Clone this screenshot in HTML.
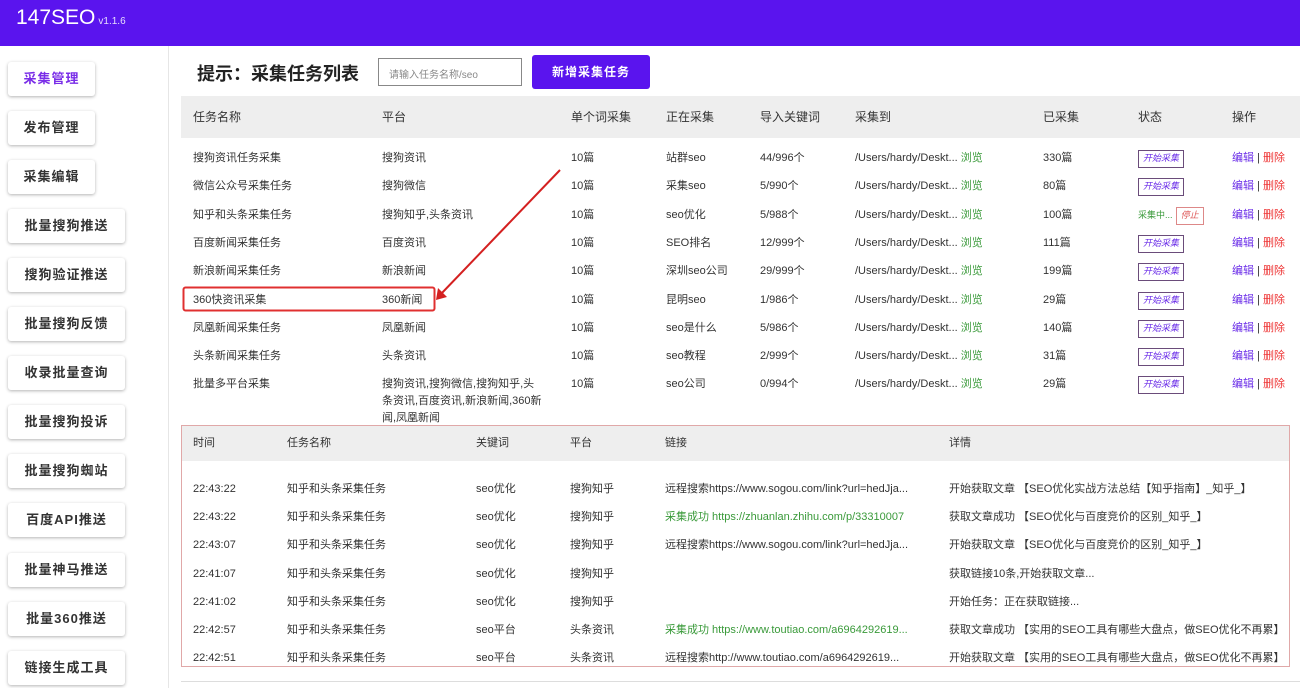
<!DOCTYPE html>
<html><head><meta charset="utf-8"><style>
*{margin:0;padding:0;box-sizing:border-box}
body{width:1300px;height:688px;overflow:hidden;background:#fff;font-family:"Liberation Sans","Noto Sans CJK SC",sans-serif;color:#333;position:relative}
.hd{position:absolute;left:0;top:0;width:1300px;height:46px;background:#5a14ee}
.logo{position:absolute;left:16px;top:6px;color:#fff;font-size:21px}
.logo small{font-size:10px;opacity:.85;margin-left:3px}
.side{position:absolute;left:168px;top:46px;width:1px;height:642px;background:#e6e6e6}
.btn{position:absolute;left:8px;width:117px;height:34px;background:#fff;border-radius:3px;box-shadow:0 1px 3px rgba(0,0,0,.3);font-size:13px;font-weight:bold;color:#333;text-align:center;line-height:34px;letter-spacing:1px}
.title{position:absolute;left:197px;top:60px;font-size:18px;font-weight:bold;color:#222}
.inp{position:absolute;left:378px;top:58px;width:144px;height:28px;border:1px solid #888;font-size:10px;color:#888;padding:7px 10px}
.add{position:absolute;left:532px;top:55px;width:118px;height:34px;background:#5a14ee;border-radius:3px;color:#fff;font-size:12px;font-weight:bold;text-align:center;line-height:34px;letter-spacing:1px}
.th{position:absolute;left:181px;top:96px;width:1119px;height:42px;background:#eee}
.r{position:absolute;left:0;width:1300px;font-size:11px;height:16px;line-height:16px;white-space:nowrap}
.r span{position:absolute}
.h{font-size:12px}
.g{color:#3a9a3a}.p{color:#6a2ce8}.red{color:#e33}
.st{display:inline-block;border:1.5px solid #6a4c7a;font-size:9px;padding:0 4px;height:18px;line-height:15px;color:#6a2ce8;margin-top:-2px}
.log{position:absolute;left:181px;top:425px;width:1109px;height:242px;border:1px solid #e0a8a8}
.lh{position:absolute;left:182px;top:426px;width:1107px;height:35px;background:#eee}
</style></head><body>
<div class="hd"><div class="logo">147SEO<small>v1.1.6</small></div></div>
<div class="side"></div>
<div class="btn" style="top:62px;width:87px;color:#7a2ee8">采集管理</div>
<div class="btn" style="top:111px;width:87px">发布管理</div>
<div class="btn" style="top:160px;width:87px">采集编辑</div>
<div class="btn" style="top:209px">批量搜狗推送</div>
<div class="btn" style="top:258px">搜狗验证推送</div>
<div class="btn" style="top:307px">批量搜狗反馈</div>
<div class="btn" style="top:356px">收录批量查询</div>
<div class="btn" style="top:405px">批量搜狗投诉</div>
<div class="btn" style="top:454px">批量搜狗蜘站</div>
<div class="btn" style="top:503px">百度API推送</div>
<div class="btn" style="top:553px">批量神马推送</div>
<div class="btn" style="top:602px">批量360推送</div>
<div class="btn" style="top:651px">链接生成工具</div>

<div class="title">提示：采集任务列表</div>
<div class="inp">请输入任务名称/seo</div>
<div class="add">新增采集任务</div>
<div class="th"></div>
<div class="r h" style="top:109px"><span style="left:193px">任务名称</span><span style="left:382px">平台</span><span style="left:571px">单个词采集</span><span style="left:666px">正在采集</span><span style="left:760px">导入关键词</span><span style="left:855px">采集到</span><span style="left:1043px">已采集</span><span style="left:1138px">状态</span><span style="left:1232px">操作</span></div>

<div class="r" style="top:150px"><span style="left:193px">搜狗资讯任务采集</span><span style="left:382px">搜狗资讯</span><span style="left:571px">10篇</span><span style="left:666px">站群seo</span><span style="left:760px">44/996个</span><span style="left:855px">/Users/hardy/Deskt... <b class="g" style="font-weight:normal">浏览</b></span><span style="left:1043px">330篇</span><span style="left:1138px"><i class="st">开始采集</i></span><span style="left:1232px"><b class="p" style="font-weight:normal">编辑</b> | <b class="red" style="font-weight:normal">删除</b></span></div>
<div class="r" style="top:178px"><span style="left:193px">微信公众号采集任务</span><span style="left:382px">搜狗微信</span><span style="left:571px">10篇</span><span style="left:666px">采集seo</span><span style="left:760px">5/990个</span><span style="left:855px">/Users/hardy/Deskt... <b class="g" style="font-weight:normal">浏览</b></span><span style="left:1043px">80篇</span><span style="left:1138px"><i class="st">开始采集</i></span><span style="left:1232px"><b class="p" style="font-weight:normal">编辑</b> | <b class="red" style="font-weight:normal">删除</b></span></div>
<div class="r" style="top:207px"><span style="left:193px">知乎和头条采集任务</span><span style="left:382px">搜狗知乎,头条资讯</span><span style="left:571px">10篇</span><span style="left:666px">seo优化</span><span style="left:760px">5/988个</span><span style="left:855px">/Users/hardy/Deskt... <b class="g" style="font-weight:normal">浏览</b></span><span style="left:1043px">100篇</span><span style="left:1138px"><b class="g" style="font-weight:normal;font-size:9px">采集中...</b> <i class="st" style="border-color:#d88;color:#d55">停止</i></span><span style="left:1232px"><b class="p" style="font-weight:normal">编辑</b> | <b class="red" style="font-weight:normal">删除</b></span></div>
<div class="r" style="top:235px"><span style="left:193px">百度新闻采集任务</span><span style="left:382px">百度资讯</span><span style="left:571px">10篇</span><span style="left:666px">SEO排名</span><span style="left:760px">12/999个</span><span style="left:855px">/Users/hardy/Deskt... <b class="g" style="font-weight:normal">浏览</b></span><span style="left:1043px">111篇</span><span style="left:1138px"><i class="st">开始采集</i></span><span style="left:1232px"><b class="p" style="font-weight:normal">编辑</b> | <b class="red" style="font-weight:normal">删除</b></span></div>
<div class="r" style="top:263px"><span style="left:193px">新浪新闻采集任务</span><span style="left:382px">新浪新闻</span><span style="left:571px">10篇</span><span style="left:666px">深圳seo公司</span><span style="left:760px">29/999个</span><span style="left:855px">/Users/hardy/Deskt... <b class="g" style="font-weight:normal">浏览</b></span><span style="left:1043px">199篇</span><span style="left:1138px"><i class="st">开始采集</i></span><span style="left:1232px"><b class="p" style="font-weight:normal">编辑</b> | <b class="red" style="font-weight:normal">删除</b></span></div>
<div class="r" style="top:292px"><span style="left:193px">360快资讯采集</span><span style="left:382px">360新闻</span><span style="left:571px">10篇</span><span style="left:666px">昆明seo</span><span style="left:760px">1/986个</span><span style="left:855px">/Users/hardy/Deskt... <b class="g" style="font-weight:normal">浏览</b></span><span style="left:1043px">29篇</span><span style="left:1138px"><i class="st">开始采集</i></span><span style="left:1232px"><b class="p" style="font-weight:normal">编辑</b> | <b class="red" style="font-weight:normal">删除</b></span></div>
<div class="r" style="top:320px"><span style="left:193px">凤凰新闻采集任务</span><span style="left:382px">凤凰新闻</span><span style="left:571px">10篇</span><span style="left:666px">seo是什么</span><span style="left:760px">5/986个</span><span style="left:855px">/Users/hardy/Deskt... <b class="g" style="font-weight:normal">浏览</b></span><span style="left:1043px">140篇</span><span style="left:1138px"><i class="st">开始采集</i></span><span style="left:1232px"><b class="p" style="font-weight:normal">编辑</b> | <b class="red" style="font-weight:normal">删除</b></span></div>
<div class="r" style="top:348px"><span style="left:193px">头条新闻采集任务</span><span style="left:382px">头条资讯</span><span style="left:571px">10篇</span><span style="left:666px">seo教程</span><span style="left:760px">2/999个</span><span style="left:855px">/Users/hardy/Deskt... <b class="g" style="font-weight:normal">浏览</b></span><span style="left:1043px">31篇</span><span style="left:1138px"><i class="st">开始采集</i></span><span style="left:1232px"><b class="p" style="font-weight:normal">编辑</b> | <b class="red" style="font-weight:normal">删除</b></span></div>
<div class="r" style="top:376px"><span style="left:193px">批量多平台采集</span><span style="left:382px">搜狗资讯,搜狗微信,搜狗知乎,头</span><span style="left:571px">10篇</span><span style="left:666px">seo公司</span><span style="left:760px">0/994个</span><span style="left:855px">/Users/hardy/Deskt... <b class="g" style="font-weight:normal">浏览</b></span><span style="left:1043px">29篇</span><span style="left:1138px"><i class="st">开始采集</i></span><span style="left:1232px"><b class="p" style="font-weight:normal">编辑</b> | <b class="red" style="font-weight:normal">删除</b></span></div>
<div class="r" style="top:393px"><span style="left:382px">条资讯,百度资讯,新浪新闻,360新</span></div>
<div class="r" style="top:410px"><span style="left:382px">闻,凤凰新闻</span></div>

<svg style="position:absolute;left:0;top:0" width="1300" height="688"><rect x="183.5" y="287.5" width="251" height="23" fill="none" stroke="#e03030" stroke-width="2" rx="2"/><line x1="560" y1="170" x2="440" y2="295" stroke="#d42020" stroke-width="2"/><polygon points="436,300 438,288 447,297" fill="#d42020"/></svg>

<div class="log"></div><div class="lh"></div>
<div class="r h" style="top:435px;font-size:11px"><span style="left:193px">时间</span><span style="left:287px">任务名称</span><span style="left:476px">关键词</span><span style="left:570px">平台</span><span style="left:665px">链接</span><span style="left:949px">详情</span></div>
<div class="r" style="top:481px"><span style="left:193px">22:43:22</span><span style="left:287px">知乎和头条采集任务</span><span style="left:476px">seo优化</span><span style="left:570px">搜狗知乎</span><span style="left:665px">远程搜索https://www.sogou.com/link?url=hedJja...</span><span style="left:949px">开始获取文章 【SEO优化实战方法总结【知乎指南】_知乎_】</span></div>
<div class="r" style="top:509px"><span style="left:193px">22:43:22</span><span style="left:287px">知乎和头条采集任务</span><span style="left:476px">seo优化</span><span style="left:570px">搜狗知乎</span><span class="g" style="left:665px">采集成功 https://zhuanlan.zhihu.com/p/33310007</span><span style="left:949px">获取文章成功 【SEO优化与百度竞价的区别_知乎_】</span></div>
<div class="r" style="top:537px"><span style="left:193px">22:43:07</span><span style="left:287px">知乎和头条采集任务</span><span style="left:476px">seo优化</span><span style="left:570px">搜狗知乎</span><span style="left:665px">远程搜索https://www.sogou.com/link?url=hedJja...</span><span style="left:949px">开始获取文章 【SEO优化与百度竞价的区别_知乎_】</span></div>
<div class="r" style="top:566px"><span style="left:193px">22:41:07</span><span style="left:287px">知乎和头条采集任务</span><span style="left:476px">seo优化</span><span style="left:570px">搜狗知乎</span><span style="left:949px">获取链接10条,开始获取文章...</span></div>
<div class="r" style="top:594px"><span style="left:193px">22:41:02</span><span style="left:287px">知乎和头条采集任务</span><span style="left:476px">seo优化</span><span style="left:570px">搜狗知乎</span><span style="left:949px">开始任务：正在获取链接...</span></div>
<div class="r" style="top:622px"><span style="left:193px">22:42:57</span><span style="left:287px">知乎和头条采集任务</span><span style="left:476px">seo平台</span><span style="left:570px">头条资讯</span><span class="g" style="left:665px">采集成功 https://www.toutiao.com/a6964292619...</span><span style="left:949px">获取文章成功 【实用的SEO工具有哪些大盘点，做SEO优化不再累】</span></div>
<div class="r" style="top:650px"><span style="left:193px">22:42:51</span><span style="left:287px">知乎和头条采集任务</span><span style="left:476px">seo平台</span><span style="left:570px">头条资讯</span><span style="left:665px">远程搜索http://www.toutiao.com/a6964292619...</span><span style="left:949px">开始获取文章 【实用的SEO工具有哪些大盘点，做SEO优化不再累】</span></div>
<div style="position:absolute;left:181px;top:681px;width:1119px;height:1px;background:#ddd"></div>
</body></html>
